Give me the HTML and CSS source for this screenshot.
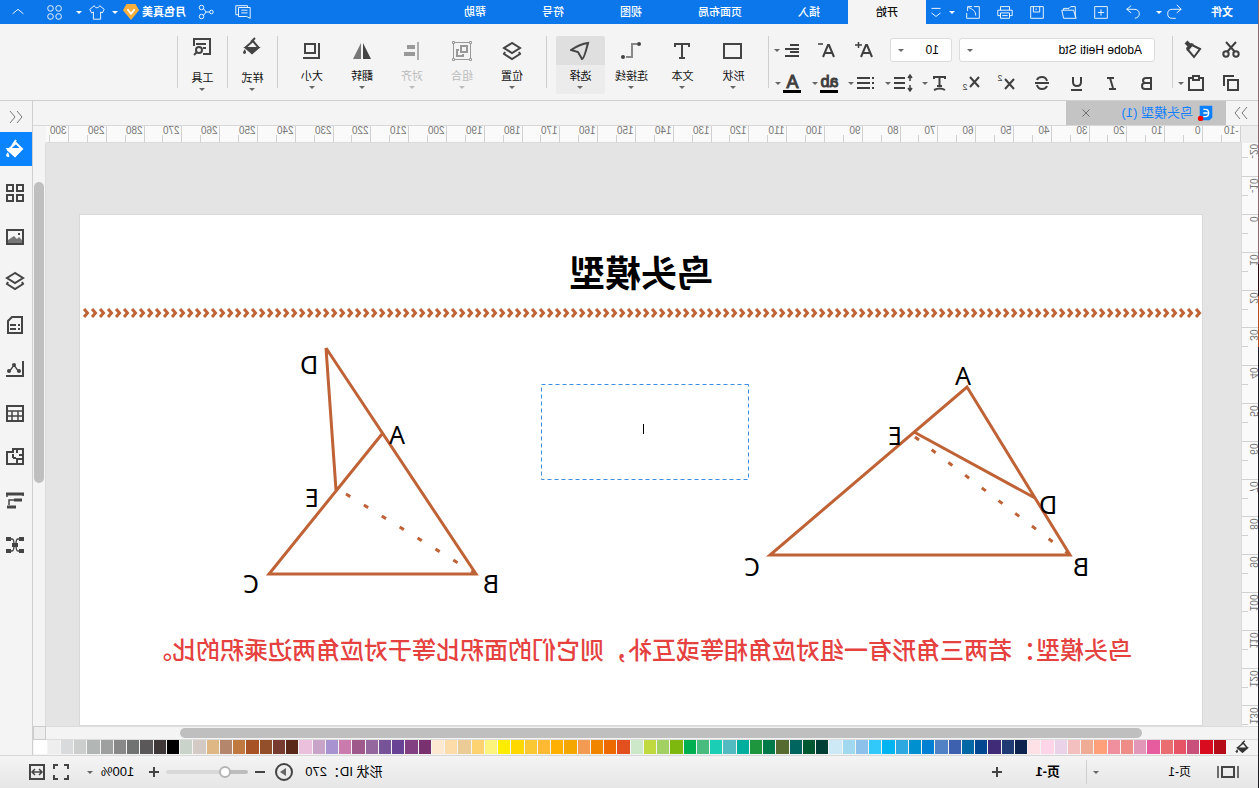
FILE: index.html
```html
<!DOCTYPE html>
<html lang="zh-CN">
<head>
<meta charset="utf-8">
<title>鸟头模型 (1)</title>
<link rel="stylesheet" href="styles.css">
</head>
<body>
<svg class="defs" aria-hidden="true">
  <symbol id="undo-l" viewBox="0 0 20 20"><path d="M7 2L2 7l5 4M2 7h10q5 0 5 5t-5 5H8"/></symbol>
  <symbol id="undo-r" viewBox="0 0 20 20"><path d="M12 3l5 4-5 4M17 7H9q-6 0-6 5 0 4 5 5"/></symbol>
  <symbol id="new" viewBox="0 0 20 20"><path d="M3 4h14v13H3zM10 7v7M6.500 10.500h7"/></symbol>
  <symbol id="folder" viewBox="0 0 20 20"><path d="M3 16V4h5l2 2h6v2M2 17l3-9h13l-2 9z"/></symbol>
  <symbol id="save" viewBox="0 0 20 20"><path d="M3 4h14v13H3zM7 4v6h7V4M11 6v2"/></symbol>
  <symbol id="print" viewBox="0 0 20 20"><path d="M5 8V4h10v4M5 14H2V8h16v6h-3M5 11h10v6H5zM7 14h6"/></symbol>
  <symbol id="export" viewBox="0 0 20 20"><path d="M9 4H3v13h14v-6M7 14c0-5 3-7 8-9M11 4h5v5"/></symbol>
  <symbol id="more" viewBox="0 0 20 20"><path d="M5 6h10M5 11l5 4 5-4"/></symbol>
  <symbol id="chat" viewBox="0 0 20 20"><path d="M5 5V3h13v10h-3M2 5h13v10H6l-4 2zM5 8h7M5 11h7"/></symbol>
  <symbol id="share" viewBox="0 0 20 20"><circle cx="4" cy="10" r="2"/><circle cx="15" cy="5" r="2.500"/><circle cx="15" cy="15" r="2.500"/><path d="M6 10h4l3-4M10 10l3 4"/></symbol>
  <symbol id="shirt" viewBox="0 0 20 20"><path d="M7 3L2 7l2 4 2-1v8h8v-8l2 1 2-4-5-4c-1 3-5 3-6 0z"/></symbol>
  <symbol id="apps" viewBox="0 0 20 20"><rect x="3" y="3" width="6" height="6" rx="2.500"/><rect x="12" y="3" width="6" height="6" rx="2.500"/><rect x="3" y="12" width="6" height="6" rx="2.500"/><rect x="12" y="12" width="6" height="6" rx="2.500"/></symbol>
  <symbol id="up" viewBox="0 0 20 20"><path d="M4 12l6-5 6 5"/></symbol>
  <symbol id="gem" viewBox="0 0 20 20"><path d="M5 1h10l4 7-9 11L1 8z" fill="#f6ae3c" stroke="none"/><path d="M6 7l4 5 4-5" stroke="#fff" stroke-width="2"/></symbol>

  <symbol id="cut" viewBox="0 0 20 20"><circle cx="5" cy="14" r="2.700"/><circle cx="15" cy="14" r="2.700"/><path d="M6 12l9-10M14 12L5 2"/></symbol>
  <symbol id="brush" viewBox="0 0 20 20"><path d="M3 9l8-4 4 5-6 7z"/><path d="M13 6l4-4" stroke-width="4"/><path d="M9 4l7 7 1-3-5-5z" fill="currentColor" stroke="none"/></symbol>
  <symbol id="copy" viewBox="0 0 20 20"><path d="M17 13V3H7M3 7h10v10H3z"/></symbol>
  <symbol id="paste" viewBox="0 0 20 20"><path d="M3 5h14v12H3z"/><path d="M7 3h6v4H7z" fill="#f4f4f4"/></symbol>
  <symbol id="bold" viewBox="0 0 20 20"><path d="M6 5h5q3 0 3 2.500T11 10H6zM6 10h6q3 0 3 3t-3 3H6z"/></symbol>
  <symbol id="italic" viewBox="0 0 20 20"><path d="M8 5h7M12 5L9 15M6 16h7"/></symbol>
  <symbol id="under" viewBox="0 0 20 20"><path d="M6 4v5q0 4 4 4t4-4V4M5 17h11"/></symbol>
  <symbol id="strike" viewBox="0 0 20 20"><path d="M15 7q-1-3-5-3T5 8M5 13q1 3 5 3t5-4M3 10h14"/></symbol>
  <symbol id="sup" viewBox="0 0 20 20"><path d="M4 6l9 10M13 6L4 16"/></symbol>
  <symbol id="sub" viewBox="0 0 20 20"><path d="M4 4l9 10M13 4L4 14"/></symbol>
  <symbol id="effect" viewBox="0 0 20 20"><path d="M5 6V4h11v2M10.500 4v9M8 13h5M5 17q5-3 11 0"/></symbol>
  <symbol id="spacing" viewBox="0 0 20 20"><path d="M8 5h11M8 10h11M8 15h11"/><path d="M3 2v6M3 12v6M1 5l2-3 2 3M1 15l2 3 2-3" stroke-width="1.500"/></symbol>
  <symbol id="list" viewBox="0 0 20 20"><path d="M6 5h13M6 10h13M6 15h13M2 5h2M2 10h2M2 15h2"/></symbol>
  <symbol id="align" viewBox="0 0 20 20"><path d="M3 5h9M3 9h14M3 12h9M3 16h14"/></symbol>
  <symbol id="Aplus" viewBox="0 0 20 20"><path d="M2 17L7 5h1l5 12M4 13h7"/><path d="M12 5h7M15.500 2v6" stroke-width="1.500"/></symbol>
  <symbol id="Aminus" viewBox="0 0 20 20"><path d="M2 17L7 5h1l5 12M4 13h7"/><path d="M13 4h5" stroke-width="1.500"/></symbol>

  <symbol id="rect" viewBox="0 0 20 20"><path d="M2 3h17v14H2z"/></symbol>
  <symbol id="text" viewBox="0 0 20 20"><path d="M3 6V3h14v3M10 3v14M7 17h6"/></symbol>
  <symbol id="connector" viewBox="0 0 20 20"><path d="M4 3h5v13h6" stroke="#888"/><circle cx="2" cy="3" r="2" fill="currentColor" stroke="none"/><circle cx="18" cy="16" r="2" fill="currentColor" stroke="none"/></symbol>
  <symbol id="select" viewBox="0 0 20 20"><path d="M2 2q8 1 17 7l-7 2-4 7q-2 0-6-16z"/></symbol>
  <symbol id="layers" viewBox="0 0 20 20"><path d="M10 2l8 5-8 5-8-5zM3 11l-1 2 8 5 8-5-1-2"/></symbol>
  <symbol id="group" viewBox="0 0 20 20"><path d="M1.500 1.500h17v17h-17z" stroke-width="1"/><path d="M5 5h6v6H5zM13 9h2v6H9v-2"/><path d="M.5 .5h2v2h-2zM17.500 .5h2v2h-2zM.5 17.500h2v2h-2zM17.500 17.500h2v2h-2z" fill="#f4f4f4" stroke-width="1"/></symbol>
  <symbol id="align-obj" viewBox="0 0 20 20"><path d="M4 1v18" stroke-width="1.500"/><path d="M7 6h8M7 13h11" stroke-width="4"/></symbol>
  <symbol id="flip" viewBox="0 0 20 20"><path d="M9 2v16H1z" fill="currentColor" stroke="none"/><path d="M11 2v16h8z" fill="#777" stroke="none"/></symbol>
  <symbol id="size" viewBox="0 0 20 20"><path d="M7 3h10v9H7zM3 2v15h16"/></symbol>
  <symbol id="bucket" viewBox="0 0 20 20"><path d="M9 4l8 7-7 6-7-7z"/><path d="M4 10h13l-7 7zM9 1l4 6" fill="currentColor"/><path d="M17 13l2 3q0 2-2 2t-1-2z" fill="currentColor" stroke="none"/></symbol>
  <symbol id="bucket2" viewBox="0 0 20 20"><path d="M9 4l7 6-6 6-6-6z"/><path d="M4 11h12l-6 5z" fill="currentColor"/><path d="M7 1l4 4"/><path d="M17 12l2 3q0 2-1.500 2T16 15z" fill="currentColor" stroke="none"/></symbol>
  <symbol id="tools" viewBox="0 0 20 20"><path d="M9 17H2V2h16v7M6 7h10M6 11h3"/><circle cx="13" cy="13" r="3"/><path d="M15 15l3 3"/></symbol>

  <symbol id="chev" viewBox="0 0 20 20"><path d="M4 4l5 6-5 6M11 4l5 6-5 6"/></symbol>
  <symbol id="doc" viewBox="0 0 20 20"><path d="M3 2h14v16H6l-3-3z" fill="#0a80ff" stroke="none"/><path d="M13 6H11q-4 0-4 4t4 4h2M8 10h5" stroke="#fff" stroke-width="1.500"/><circle cx="16" cy="16" r="3" fill="#f00" stroke="none"/></symbol>
  <symbol id="close" viewBox="0 0 20 20"><path d="M6 6l8 8M14 6l-8 8"/></symbol>
  <symbol id="tiles" viewBox="0 0 20 20"><path d="M2 2h6v6H2zM12 2h6v6h-6zM2 12h6v6H2zM12 12h6v6h-6z"/></symbol>
  <symbol id="picture" viewBox="0 0 20 20"><path d="M2 3h16v14H2z"/><path d="M3 16v-3l3-3 2 2 3-3 6 4v3z" fill="#777" stroke="none"/><path d="M5 7h2"/></symbol>
  <symbol id="note" viewBox="0 0 20 20"><path d="M3 2h10l4 4v12H3zM5 10h2M9 10h6M5 14h2M9 14h6"/></symbol>
  <symbol id="chart" viewBox="0 0 20 20"><path d="M2 2v15h17"/><path d="M6 13l5-7 5 7" stroke-width="1.300"/><circle cx="6" cy="12" r="2" fill="currentColor" stroke="none"/><circle cx="11" cy="6" r="2" fill="currentColor" stroke="none"/><circle cx="16" cy="12" r="2" fill="currentColor" stroke="none"/></symbol>
  <symbol id="table" viewBox="0 0 20 20"><path d="M2 3h16v15H2z"/><path d="M2 8h16M2 13h16M7 8v10M13 8v10" stroke-width="1.500"/></symbol>
  <symbol id="plan" viewBox="0 0 20 20"><path d="M2 2h10v3h6v12H2zM2 8h4M8 2v4M12 7v4M9 11h3M2 12h6v5"/></symbol>
  <symbol id="gantt" viewBox="0 0 20 20"><path d="M1 3h18M3 9h8M9 16h9" stroke-width="3"/><path d="M11 9h5v5M18 3v3M2 3v2" stroke-width="1.500"/></symbol>
  <symbol id="mind" viewBox="0 0 20 20"><path d="M4 4h3q2 0 2 5h2q0-5 2-5h3M4 16h3q2 0 2-6h2q0 6 2 6h3" stroke-width="1.300"/><path d="M1 4h5M14 4h5M1 16h5M14 16h5M7 10h6" stroke-width="4"/></symbol>
  <symbol id="pages" viewBox="0 0 24 20"><path d="M6 5h12v10H6z"/><path d="M2 4v12M22 4v12" stroke-width="1.500"/></symbol>
  <symbol id="play" viewBox="0 0 20 20"><circle cx="10" cy="10" r="8"/><path d="M8 6l6 4-6 4z" fill="#666" stroke="none"/></symbol>
  <symbol id="fit" viewBox="0 0 20 20"><path d="M3 7V3h4M13 3h4v4M17 13v4h-4M7 17H3v-4"/></symbol>
  <symbol id="fitw" viewBox="0 0 20 20"><path d="M3 3h14v14H3z"/><path d="M6 10h8M8 7l-3 3 3 3M12 7l3 3-3 3" stroke-width="1.500"/></symbol>
  <symbol id="plus" viewBox="0 0 20 20"><path d="M5 10h10M10 5v10"/></symbol>
  <symbol id="minus" viewBox="0 0 20 20"><path d="M5 10h10"/></symbol>
</svg>

<div class="app">
  <header class="titlebar">
    <button class="menu file">文件</button>
    <button class="tb narrow" aria-label="撤销"><svg><use href="#undo-l"/></svg></button><i class="caret light"></i>
    <button class="tb gap" aria-label="重做"><svg><use href="#undo-r"/></svg></button>
    <button class="tb" aria-label="新建"><svg><use href="#new"/></svg></button>
    <button class="tb" aria-label="打开"><svg><use href="#folder"/></svg></button>
    <button class="tb" aria-label="保存"><svg><use href="#save"/></svg></button>
    <button class="tb" aria-label="打印"><svg><use href="#print"/></svg></button>
    <button class="tb" aria-label="导出"><svg><use href="#export"/></svg></button><i class="caret light"></i>
    <button class="tb narrow" aria-label="更多"><svg><use href="#more"/></svg></button>
    <button class="menu active">开始</button>
    <button class="menu">插入</button>
    <button class="menu">页面布局</button>
    <button class="menu">视图</button>
    <button class="menu">符号</button>
    <button class="menu">帮助</button>
    <div class="account">
      <button class="tb" aria-label="消息"><svg><use href="#chat"/></svg></button>
      <button class="tb" aria-label="分享"><svg><use href="#share"/></svg></button>
      <span class="user">月色真美</span>
      <button class="tb vip" aria-label="会员"><svg><use href="#gem"/></svg></button><i class="caret light"></i>
      <button class="tb narrow" aria-label="主题"><svg><use href="#shirt"/></svg></button><i class="caret light"></i>
      <button class="tb" aria-label="应用"><svg><use href="#apps"/></svg></button>
      <button class="tb" aria-label="收起"><svg><use href="#up"/></svg></button>
    </div>
  </header>

  <section class="ribbon">
    <div class="clip">
      <button class="rb" aria-label="剪切"><svg><use href="#cut"/></svg></button>
      <button class="rb" aria-label="格式刷"><svg><use href="#brush"/></svg></button>
      <button class="rb" aria-label="复制"><svg><use href="#copy"/></svg></button>
      <button class="rb drop" aria-label="粘贴"><svg><use href="#paste"/></svg><i class="caret"></i></button>
    </div>
    <div class="sep"></div>
    <div class="font">
      <div class="row inputs">
        <label class="pick family"><select aria-label="字体"><option>Adobe Heiti Std</option></select><i class="caret"></i></label>
        <label class="pick points"><select aria-label="字号"><option>10</option></select><i class="caret"></i></label>
        <button class="rb grow" aria-label="增大字号"><svg><use href="#Aplus"/></svg></button>
        <button class="rb grow" aria-label="减小字号"><svg><use href="#Aminus"/></svg></button>
        <button class="rb drop" aria-label="对齐"><svg><use href="#align"/></svg><i class="caret"></i></button>
      </div>
      <div class="row">
        <button class="rb" aria-label="加粗"><svg><use href="#bold"/></svg></button>
        <button class="rb" aria-label="斜体"><svg><use href="#italic"/></svg></button>
        <button class="rb" aria-label="下划线"><svg><use href="#under"/></svg></button>
        <button class="rb" aria-label="删除线"><svg><use href="#strike"/></svg></button>
        <button class="rb" aria-label="上标"><svg><use href="#sup"/></svg><sup>2</sup></button>
        <button class="rb" aria-label="下标"><svg><use href="#sub"/></svg><sub>2</sub></button>
        <button class="rb drop" aria-label="文字效果"><svg><use href="#effect"/></svg><i class="caret"></i></button>
        <button class="rb drop" aria-label="行距"><svg><use href="#spacing"/></svg><i class="caret"></i></button>
        <button class="rb drop" aria-label="项目符号"><svg><use href="#list"/></svg><i class="caret"></i></button>
        <button class="rb drop"><span class="ink">ab</span><i class="caret"></i></button>
        <button class="rb drop"><span class="ink letter">A</span><i class="caret"></i></button>
      </div>
    </div>
    <div class="sep"></div>
    <div class="tools">
      <button class="big"><svg><use href="#rect"/></svg><span>形状</span><i class="caret"></i></button>
      <button class="big"><svg><use href="#text"/></svg><span>文本</span><i class="caret"></i></button>
      <button class="big"><svg><use href="#connector"/></svg><span>连接线</span><i class="caret"></i></button>
      <button class="big on"><svg><use href="#select"/></svg><span>选择</span><i class="caret"></i></button>
    </div>
    <div class="sep"></div>
    <div class="tools arrange">
      <button class="big"><svg><use href="#layers"/></svg><span>位置</span><i class="caret"></i></button>
      <button class="big" disabled><svg><use href="#group"/></svg><span>组合</span><i class="caret"></i></button>
      <button class="big" disabled><svg><use href="#align-obj"/></svg><span>对齐</span><i class="caret"></i></button>
      <button class="big"><svg><use href="#flip"/></svg><span>翻转</span><i class="caret"></i></button>
      <button class="big"><svg><use href="#size"/></svg><span>大小</span><i class="caret"></i></button>
    </div>
    <div class="sep"></div>
    <div class="tools tight"><button class="big"><svg><use href="#bucket2"/></svg><span>样式</span><i class="caret"></i></button></div>
    <div class="sep"></div>
    <div class="tools tight"><button class="big"><svg><use href="#tools"/></svg><span>工具</span><i class="caret"></i></button></div>
    <div class="sep"></div>
  </section>

  <div class="body">
    <main class="work">
      <div class="tabs">
        <button class="fold" aria-label="展开"><svg><use href="#chev"/></svg></button>
        <div class="tab"><svg><use href="#doc"/></svg><span>鸟头模型 (1)</span><button class="close" aria-label="关闭"><svg><use href="#close"/></svg></button></div>
      </div>
      <div class="stage">
        <div class="corner"></div>
        <svg class="ruler-h" id="ruler-h"></svg>
        <div class="corner end"></div>
        <svg class="ruler-v" id="ruler-v"></svg>
        <div class="canvas">
          <div class="page">
            <svg class="drawing" role="img" aria-label="鸟头模型图">
              <defs><pattern id="arrows" width="8" height="10" patternUnits="userSpaceOnUse" y="94"><path d="M6 1L2.500 5 6 9" fill="none" stroke="#bf6236" stroke-width="3"/></pattern></defs>
              <text class="heading" x="561" y="73">鸟头模型</text>
              <rect class="band" x="0" y="94" width="1119" height="10" fill="url(#arrows)"/>
              <g class="lines">
                <path d="M235 173L132 341H432zM288 218L167 284"/>
                <path d="M287 223L132 341" stroke-dasharray="5 16"/>
                <path d="M876 134L726 360H933L820 220M876 134L866 276"/>
                <path d="M856 280L726 360" stroke-dasharray="5 16"/>
              </g>
              <g class="points">
                <text x="239" y="171">A</text><text x="307" y="231">E</text><text x="154" y="300">D</text><text x="121" y="362">B</text><text x="450" y="362">C</text>
                <text x="805" y="230">A</text><text x="893" y="160">D</text><text x="890" y="293">E</text><text x="711" y="379">B</text><text x="951" y="379">C</text>
              </g>
              <rect class="editbox" x="453.500" y="170.500" width="207" height="95"/>
              <path class="cursor" d="M558.500 210v10"/>
              <text class="claim" x="70" y="445">鸟头模型：若两三角形有一组对应角相等或互补，则它们的面积比等于对应角两边乘积的比。</text>
            </svg>
          </div>
        </div>
        <div class="vscroll"><div class="thumb"></div></div>
        <div class="hscroll"><div class="thumb"></div></div>
        <div class="corner foot"></div>
      </div>
      <div class="palette">
        <button class="fill" aria-label="填充"><svg><use href="#bucket2"/></svg></button>
        <div class="swatches" id="swatches"></div>
      </div>
    </main>
    <aside class="side">
      <button class="fold" aria-label="收起面板"><svg><use href="#chev"/></svg></button>
      <button class="item on" aria-label="填充"><svg><use href="#bucket"/></svg></button>
      <button class="item" aria-label="符号"><svg><use href="#tiles"/></svg></button>
      <button class="item" aria-label="图片"><svg><use href="#picture"/></svg></button>
      <button class="item" aria-label="图层"><svg><use href="#layers"/></svg></button>
      <button class="item" aria-label="备注"><svg><use href="#note"/></svg></button>
      <button class="item" aria-label="图表"><svg><use href="#chart"/></svg></button>
      <button class="item" aria-label="表格"><svg><use href="#table"/></svg></button>
      <button class="item" aria-label="平面图"><svg><use href="#plan"/></svg></button>
      <button class="item" aria-label="甘特图"><svg><use href="#gantt"/></svg></button>
      <button class="item" aria-label="思维导图"><svg><use href="#mind"/></svg></button>
    </aside>
  </div>

  <footer class="status">
    <button class="sb pagesicon" aria-label="页面"><svg class="wide"><use href="#pages"/></svg></button>
    <span class="pagename">页-1</span><i class="caret"></i>
    <div class="rule"></div>
    <button class="pagetab">页-1</button>
    <button class="sb" aria-label="添加页面"><svg><use href="#plus"/></svg></button>
    <div class="zoom">
      <span class="shape">形状 ID：270</span>
      <button class="sb" aria-label="播放"><svg><use href="#play"/></svg></button>
      <button class="sb" aria-label="缩小"><svg><use href="#minus"/></svg></button>
      <input type="range" min="0" max="100" value="24" aria-label="缩放">
      <button class="sb" aria-label="放大"><svg><use href="#plus"/></svg></button>
      <span class="percent">100%</span><i class="caret"></i>
      <button class="sb fit" aria-label="全屏"><svg><use href="#fit"/></svg></button>
      <button class="sb" aria-label="适合宽度"><svg><use href="#fitw"/></svg></button>
    </div>
  </footer>
  <div class="edge"></div>
</div>
<script src="app.js"></script>
</body>
</html>
```

FILE: styles.css
```css
* { box-sizing: border-box; }
html, body { height: 100%; margin: 0; overflow: hidden; }
body { font: 11px/16px "Liberation Sans", "Noto Sans CJK SC", sans-serif; color: #111; background: #f4f4f4; }
button, select { font: inherit; color: inherit; border: 0; background: none; padding: 0; margin: 0; }
.defs { position: absolute; width: 0; height: 0; }
.app { position: relative; height: 100vh; display: flex; flex-direction: column; transform: scaleX(-1); background: #f4f4f4; }
svg { width: 20px; height: 20px; fill: none; stroke: currentColor; stroke-width: 2; flex: none; display: block; }
.caret { flex: none; width: 0; height: 0; border: 3px solid transparent; border-top-color: #666; border-bottom: 0; }
.caret.light { border-top-color: #fff; margin: 0 2px; }
.edge { position: absolute; left: 0; top: 0; bottom: 0; width: 1px; background: linear-gradient(#8f6468 0 264px, #31060b 264px 296px, #b94a1c 296px 347px, #1b1a26 347px); }

.titlebar { flex: none; display: flex; align-items: center; height: 24px; background: #0b77ea; color: #fff; }
.titlebar svg { stroke-width: 1; width: 18px; height: 18px; }
.menu { height: 24px; padding: 0 28px; font-weight: 500; flex: none; }
.menu.file { padding: 0 26px; font-weight: 700; }
.menu.active { background: #f4f4f4; color: #111; }
.tb { width: 32px; height: 24px; display: grid; place-items: center; flex: none; }
.tb.narrow { width: 21px; }
.tb.gap { margin-left: 5px; }
.account { margin-left: auto; display: flex; align-items: center; }
.account .tb { width: 37px; }
.account .tb.narrow { width: 26px; }
.account .tb.vip { width: 22px; }
.user { font-weight: 700; margin-left: 2px; }

.ribbon { flex: none; display: flex; align-items: flex-start; height: 77px; padding-top: 12px; border-bottom: 1px solid #cfcfcf; color: #3f3f3f; }
.sep { width: 1px; height: 52px; background: #cfcfcf; flex: none; }
.clip { display: grid; grid-template-columns: 38px 38px; grid-auto-rows: 28px; row-gap: 5px; width: 86px; padding-left: 10px; }
.rb { width: 35px; height: 28px; display: flex; align-items: center; justify-content: center; flex: none; }
.rb.drop { width: 37px; gap: 2px; }
.rb sup, .rb sub { font-size: 9px; line-height: 9px; margin: 0 0 0 -5px; }
.rb sup { align-self: flex-start; margin-top: 5px; }
.rb sub { align-self: flex-end; margin-bottom: 5px; }
.font { width: 403px; display: grid; grid-auto-rows: 28px; row-gap: 5px; padding-left: 7px; }
.row { display: flex; align-items: center; }
.inputs { padding-left: 10px; }
.pick { display: flex; align-items: center; height: 24px; padding: 0 7px 0 12px; background: #fff; border: 1px solid #dcdcdc; border-radius: 3px; color: #000; font-size: 12px; }
.pick select { appearance: none; flex: 1; min-width: 0; }
.family { width: 196px; margin-right: 7px; }
.points { width: 62px; margin-right: 7px; }
.rb.grow { width: 38px; }
.ink { width: 18px; border-bottom: 3px solid #000; font-size: 16px; line-height: 16px; -webkit-text-stroke: 1px currentColor; text-align: center; }
.ink.letter { font-size: 18px; }
.tools { display: flex; padding: 0 8px 0 9px; }
.big { width: 51px; height: 58px; display: flex; flex-direction: column; align-items: center; padding-top: 5px; color: #444; border-radius: 2px; flex: none; }
.big span { margin-top: 7px; color: #111; line-height: 16px; }
.big .caret { margin-top: 2px; }
.big:disabled { color: #999; }
.big:disabled span { color: #bbb; }
.big:disabled .caret { border-top-color: #bbb; }
.big.on { width: 49px; margin: 0 1px; background: linear-gradient(#dfdfdf 0 29px, #ececec 29px); }
.arrange { padding: 0 9px; }
.arrange .big { width: 50px; }
.tight { padding: 0; }
.tight .big { width: 49px; padding-top: 1px; }
.tight .big span { margin-top: 13px; }

.body { flex: 1; display: flex; min-height: 0; }
.work { flex: 1; display: flex; flex-direction: column; min-width: 0; }
.tabs { flex: none; height: 25px; display: flex; align-items: stretch; border-bottom: 1px solid #d8d8d8; }
.fold { width: 32px; display: grid; place-items: center; color: #777; }
.fold svg { stroke-width: 1; }
.tabs .fold { width: 33px; padding-left: 3px; }
.tabs .fold svg, .side .fold svg { transform: none; }
.tabs .fold svg { transform: none; }
.tab { width: 160px; display: flex; align-items: center; gap: 4px; padding: 0 11px; background: #c4c4c4; color: #1580ff; font-size: 13px; }
.tab svg { width: 18px; height: 18px; }
.close { margin-left: auto; color: #666; }
.close svg { stroke-width: 1; }
.stage { flex: 1; min-height: 0; display: grid; grid-template-columns: 18px minmax(0, 1fr) 13px; grid-template-rows: 17px minmax(0, 1fr) 14px; }
.corner { background: #eee; }
.corner.end { background: #f4f4f4; }
.corner.foot { border: 1px solid #ccc; }
.ruler-h, .ruler-v { width: 100%; height: 100%; background: #fafafa; stroke: #d0d0d0; stroke-width: 1; min-width: 0; min-height: 0; overflow: hidden; }
.ruler-h { border-bottom: 1px solid #dcdcdc; }
.ruler-v { border-right: 1px solid #dcdcdc; }
.ruler-h text, .ruler-v text { font-size: 10px; fill: #777; stroke: none; }
.ruler-v text { text-anchor: end; }
.canvas { display: flex; padding: 71px 33px 0 38px; background: #e4e4e4; overflow: hidden; }
.page { flex: 1; min-width: 0; padding-left: 1px; background: #fff; box-shadow: inset 0 0 0 1px #d9d9d9; overflow: hidden; }
.drawing { width: 100%; height: 100%; overflow: hidden; }
.drawing text { stroke: none; fill: #000; font-family: "Noto Sans", "Noto Sans CJK SC", sans-serif; }
.drawing .heading { font-size: 36px; font-weight: 700; text-anchor: middle; }
.drawing .points text { font-size: 25px; text-anchor: middle; }
.drawing .claim { font-size: 24px; font-weight: 500; fill: #e4413f; }
.band { stroke: none; }
.cursor { stroke: #000; stroke-width: 1; }
.lines { stroke: #bf6236; stroke-width: 3; }
.editbox { stroke: #3c8de0; stroke-width: 1; stroke-dasharray: 4 3; }
.vscroll { padding: 39px 1px 0; border-left: 1px solid #dcdcdc; background: #f4f4f4; overflow: hidden; }
.thumb { background: #bfbfbf; border-radius: 5px; }
.vscroll .thumb { height: 56%; max-height: 301px; }
.hscroll { grid-column: 1 / 3; padding: 1px 134px 0 117px; border: 1px solid #dcdcdc; border-width: 1px 0; }
.hscroll .thumb { height: 10px; }
.palette { flex: none; height: 15px; display: flex; padding-right: 1px; }
.fill { width: 33px; display: grid; place-items: center; color: #333; }
.fill svg { width: 15px; height: 15px; }
.swatches { flex: 1; display: flex; gap: 1px; }
.swatches button { flex: 1; height: 14px; }
.side { flex: none; width: 33px; border-left: 1px solid #cfcfcf; display: flex; flex-direction: column; gap: 10px; color: #444; background: #f4f4f4; }
.side .fold { height: 31px; margin-bottom: -10px; }
.side .fold svg { transform: scaleX(-1); }
.item { height: 34px; display: grid; place-items: center; padding-left: 2px; }
.item.on { background: #0a84ff; color: #fff; }

.status { flex: none; height: 33px; display: flex; align-items: center; border-top: 1px solid #d8d8d8; background: linear-gradient(#f4f4f4, #e6e6e6); font-size: 13px; color: #000; }
.sb { width: 24px; height: 24px; display: grid; place-items: center; color: #444; flex: none; }
.pagesicon { margin: 0 17px 0 19px; }
svg.wide { width: 24px; }
.pagename { width: 92px; padding-left: 8px; font-size: 12px; }
.status > .caret { margin-left: 8px; }
.rule { width: 1px; height: 24px; margin-left: 6px; background: #cfcfcf; }
.pagetab { font-weight: 700; padding: 0 26px; }
.zoom { margin-left: auto; display: flex; align-items: center; padding-right: 25px; }
.shape { margin-right: 9px; }
.zoom input { appearance: none; width: 82px; height: 4px; margin: 0; border-radius: 2px; background: linear-gradient(90deg, #bdbdbd 24%, #d8d8d8 24%); }
.zoom input::-webkit-slider-thumb { appearance: none; width: 12px; height: 12px; border-radius: 6px; border: 2px solid #b5b5b5; background: #fff; }
.percent { margin: 0 8px; }
.fit { margin-left: 14px; }
```

FILE: app.js
```js
const NS = "http://www.w3.org/2000/svg";
function add(parent, tag, attrs, text) {
  const el = document.createElementNS(NS, tag);
  for (const k in attrs) el.setAttribute(k, attrs[k]);
  if (text !== undefined) el.textContent = text;
  parent.appendChild(el);
}

// Ten ruler units in screen pixels.
const STEP = 37.8;
const h = document.getElementById("ruler-h");
for (let i = -1; i <= 30; i++) {
  const x = Math.round(38 + i * STEP) + 0.5;
  add(h, "path", { d: `M${x} 0V16M${Math.round(x + STEP / 2) + 0.5} 9V16` });
  add(h, "text", { x: x + 2, y: 8 }, String(i * 10));
}
const v = document.getElementById("ruler-v");
for (let i = -2; i <= 13; i++) {
  const y = Math.round(71 + i * STEP) + 0.5;
  add(v, "path", { d: `M0 ${y}H18M11 ${Math.round(y + STEP / 2) + 0.5}H18` });
  add(v, "text", { transform: `translate(9 ${Math.max(y + 2, 1)}) rotate(-90)` }, String(i * 10));
}

const colors = ("b50a17 d90c1f c9507a e75466 ea6d71 e75c9f e296b8 ee8d88 f08f9d ffa07a efab94 f4bfbf ead3e8 ffd5e7 fee1e7 " +
  "0f2351 203a73 3f2b77 02478f 0069a5 3e61af 5282c6 0080d2 0090d0 2ea8e0 00b4f1 31c8fa 8bc1ea 9fd8ef cde9f5 " +
  "003f35 005830 00645f 556b2f 007a48 1d963e 00ae9d 52bbc1 1acdb5 48bc7f 00af50 7eb80e a2d063 bfd93f cde7c9 " +
  "e35020 ec6a00 f28500 f39a53 f3a700 ffb000 ffb933 fac832 ffd800 ffed00 fcf47c fdd270 ebcb96 fddcaa fde9d1 " +
  "79316f 823f82 684295 765497 95679f 9f5a8b cb7aae a892cf c8a4c9 ebc0dc 5a2919 773b30 934f2a a85326 c07a40 " +
  "b4866c deb784 d3cac5 c9d3ca 000000 3f3838 5a5858 717372 878887 9da09f b2b6b4 cbcecd d9dadb eeeeee ffffff").split(" ");
const box = document.getElementById("swatches");
for (const c of colors) {
  const b = document.createElement("button");
  b.style.background = "#" + c;
  b.setAttribute("aria-label", "#" + c);
  box.appendChild(b);
}
```
